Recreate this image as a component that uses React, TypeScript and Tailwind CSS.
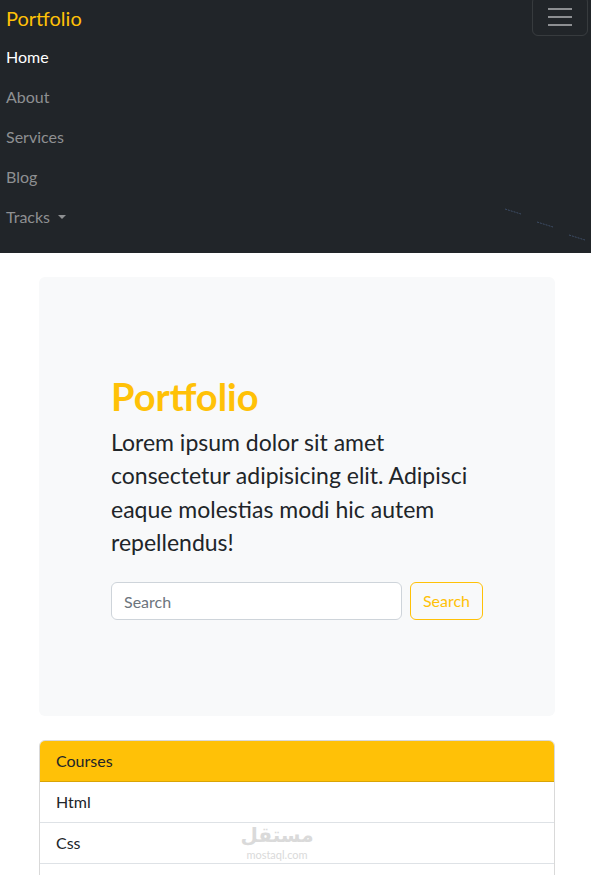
const links = ["Home", "About", "Services", "Blog"];
const courses = ["Html", "Css", "JavaScript", "React"];

const Navbar = () => (
    <nav className="bg-[#212529] pl-[6px] pr-[3px] pb-[16px] relative">
        <div className="flex flex-row justify-between items-start h-[37px]">
            <a className="text-[#ffc107] text-[20px] leading-[30px] mt-[3px]">Portfolio</a>
            <button className="-mt-[4px] w-[56px] h-[40px] border border-white/10 rounded-[6px] flex items-center justify-center">
                <svg width="26" height="22" viewBox="0 0 26 22">
                    <path d="M1 4h24M1 12h24M1 20h24" stroke="#8d8f92" strokeWidth="2" />
                </svg>
            </button>
        </div>
        <ul className="flex flex-col">
            {links.map((l, i) => (
                <li key={l}>
                    <a className={`block py-[8px] text-[16px] leading-[24px] ${i === 0 ? "text-white" : "text-[#8e9092]"}`}>{l}</a>
                </li>
            ))}
            <li>
                <a className="flex flex-row items-center py-[8px] text-[16px] leading-[24px] text-[#8e9092]">
                    Tracks
                    <span className="ml-[8px] w-0 h-0 border-x-[4px] border-x-transparent border-t-[4px] border-t-[#8e9092]"></span>
                </a>
            </li>
        </ul>
        <svg className="absolute right-0 bottom-[12px]" width="86" height="36" viewBox="0 0 86 36">
            <path d="M0 4L16 9M32 17L48 22M64 30L80 35" stroke="#3d4d66" strokeWidth="1" strokeDasharray="2 1" />
        </svg>
    </nav>
);

const Hero = () => (
    <div className="bg-[#f8f9fa] rounded-[6px] pt-[98px] pb-[96px] px-[72px]">
        <h1 className="text-[#ffc107] text-[38px] leading-[43px] font-bold mb-[8px]">Portfolio</h1>
        <p className="text-[#212529] text-[23px] leading-[33.3px] mb-[23px]">
            Lorem ipsum dolor sit amet consectetur adipisicing elit. Adipisci eaque molestias modi hic autem repellendus!
        </p>
        <form className="flex flex-row gap-[8px]">
            <input
                className="flex-1 h-[38px] bg-white border border-[#ced4da] rounded-[6px] px-[12px] text-[16px] placeholder:text-[#6c757d] outline-none"
                placeholder="Search"
            />
            <button type="button" className="h-[38px] px-[12px] border border-[#ffc107] rounded-[6px] text-[#ffc107] text-[16px]">
                Search
            </button>
        </form>
    </div>
);

const Courses = () => (
    <div className="mt-[24px] border border-black/15 rounded-[6px] overflow-hidden relative">
        <div className="bg-[#ffc107] px-[16px] py-[8px] text-[16px] leading-[24px] text-[#212529] border-b border-black/15">Courses</div>
        <ul>
            {courses.map((c) => (
                <li key={c} className="px-[16px] py-[8px] text-[16px] leading-[24px] text-[#212529] border-b border-[#dee2e6] bg-white">{c}</li>
            ))}
        </ul>
        <div className="absolute left-[203px] top-[82px] w-[68px] flex flex-col items-center gap-[2px] text-[#dadada] pointer-events-none">
            <span className="text-[20px] leading-[24px] font-bold" style={{ fontFamily: '"Noto Sans", "DejaVu Sans", sans-serif' }}>مستقل</span>
            <span className="text-[11px] leading-[12px]">mostaql.com</span>
        </div>
    </div>
);

export default function App() {
    return (
        <div className="min-h-screen bg-white" style={{ fontFamily: 'Lato, "Open Sans", sans-serif' }}>
            <Navbar />
            <div className="px-[39px] pt-[24px] pb-[24px] w-[594px]">
                <Hero />
                <Courses />
            </div>
        </div>
    );
}
